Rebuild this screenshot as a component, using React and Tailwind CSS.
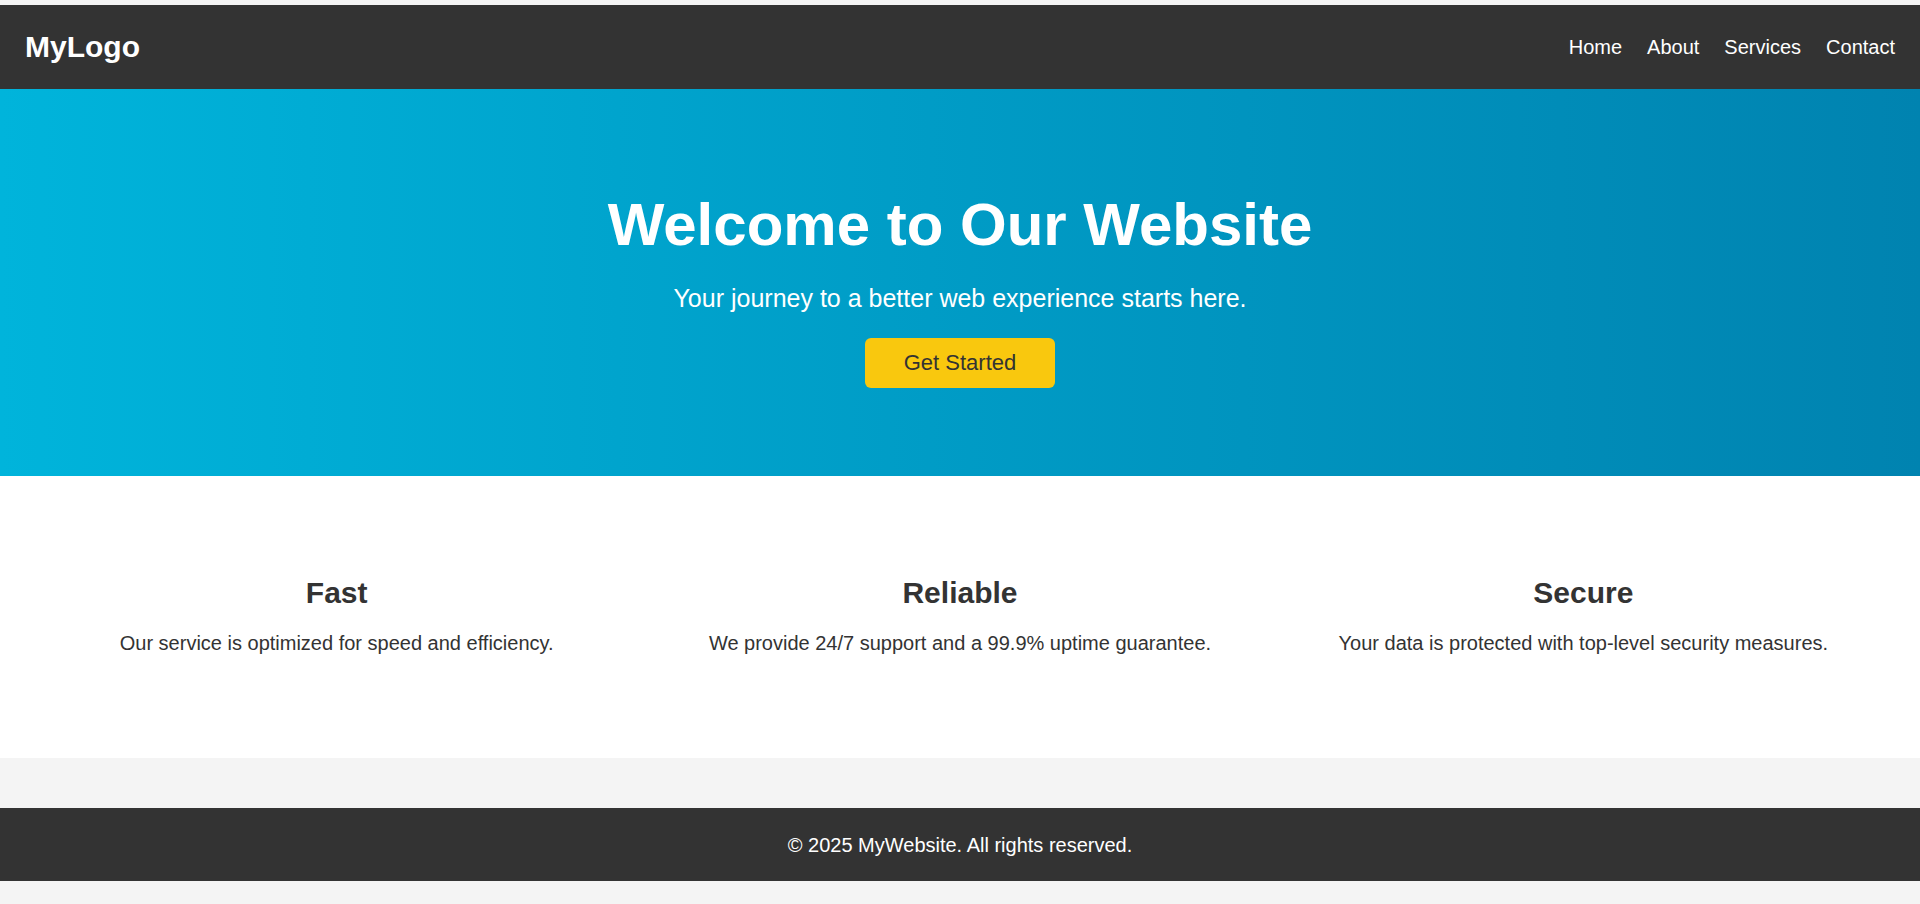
const navLinks = ['Home', 'About', 'Services', 'Contact'];

const features = [
    { title: 'Fast', text: 'Our service is optimized for speed and efficiency.' },
    { title: 'Reliable', text: 'We provide 24/7 support and a 99.9% uptime guarantee.' },
    { title: 'Secure', text: 'Your data is protected with top-level security measures.' },
];

const App = () => {
    return (
        <div
            className="min-h-screen bg-[#f4f4f4] pt-[5px] text-[#333] leading-[1.15]"
            style={{ fontFamily: '"Liberation Sans", Arial, sans-serif' }}
        >
            {/* Header */}
            <header className="h-[84px] bg-[#333] px-[25px] flex items-center justify-between text-white">
                <div className="text-[30px] font-bold">MyLogo</div>
                <nav className="flex items-center gap-[25px] text-[20px]">
                    {navLinks.map(link => (
                        <a key={link} href="#" className="text-white no-underline">
                            {link}
                        </a>
                    ))}
                </nav>
            </header>

            {/* Hero */}
            <section className="bg-linear-to-r from-[#00b4db] to-[#0083b0] text-white text-center pt-[101px] pb-[88px]">
                <h1 className="text-[60px] font-bold">Welcome to Our Website</h1>
                <p className="text-[25px] mt-[25px]">Your journey to a better web experience starts here.</p>
                <button className="mt-[25px] w-[190px] h-[50px] rounded-[6px] bg-[#f9c80e] text-[#333] text-[22px] cursor-pointer">
                    Get Started
                </button>
            </section>

            {/* Features */}
            <section className="bg-white px-[25px] pt-[100px] pb-[103px] grid grid-cols-3">
                {features.map(f => (
                    <div key={f.title} className="text-center">
                        <h3 className="text-[30px] font-bold mb-[22px]">{f.title}</h3>
                        <p className="text-[20px]">{f.text}</p>
                    </div>
                ))}
            </section>

            {/* Footer */}
            <footer className="mt-[50px] bg-[#333] text-white text-center text-[20px] pt-[26px] pb-[24px]">
                © 2025 MyWebsite. All rights reserved.
            </footer>
        </div>
    );
};

export default App;
